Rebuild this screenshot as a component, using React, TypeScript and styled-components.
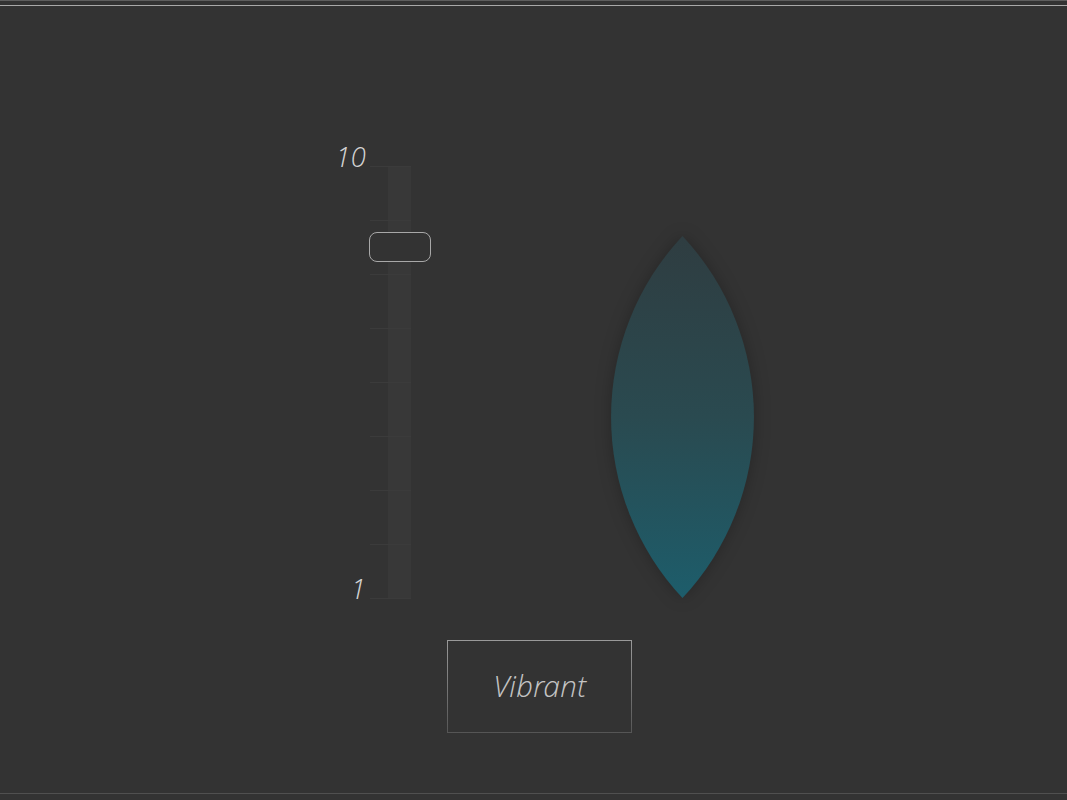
import React from "react";
import styled, { createGlobalStyle } from "styled-components";

const Global = createGlobalStyle`
  html, body { margin: 0; padding: 0; background: #333333; }
  body { font-family: "Open Sans", "Liberation Sans", sans-serif; }
`;

const Frame = styled.div`
  box-sizing: border-box;
  width: 1067px;
  height: 800px;
  background: #333333;
  border-top: 1px solid #5e5e5e;
  display: flex;
  flex-direction: column;
`;

const TopRule = styled.div`
  margin-top: 4px;
  height: 1px;
  background: #a9a9a9;
`;

const BottomRule = styled.div`
  margin-top: auto;
  margin-bottom: 6px;
  height: 1px;
  background: #505050;
`;

const Content = styled.div`
  display: flex;
  flex-direction: column;
  padding-top: 136px;
  padding-left: 335px;
`;

const Row = styled.div`
  display: flex;
  align-items: flex-start;
`;

const Labels = styled.div`
  width: 31px;
  height: 460px;
  display: flex;
  flex-direction: column;
  justify-content: space-between;
  align-items: flex-end;
  margin-right: 4px;
`;

const Label = styled.span`
  font-family: "Open Sans Light", "Open Sans", "Liberation Sans", sans-serif;
  font-weight: 300;
  font-style: italic;
  font-size: 28px;
  line-height: 28px;
  color: #d2d2d2;
`;

const Track = styled.div`
  position: relative;
  margin-top: 24px;
  width: 41px;
  height: 433px;
  display: flex;
  justify-content: flex-end;
`;

const Rail = styled.div`
  width: 23px;
  height: 100%;
  background: #383838;
`;

const Ticks = styled.div`
  position: absolute;
  inset: 0;
  display: flex;
  flex-direction: column;
  justify-content: space-between;
`;

const Tick = styled.div`
  height: 1px;
  width: 41px;
  background: #3b3b3b;
`;

const Thumb = styled.div`
  position: absolute;
  left: -1px;
  width: 62px;
  height: 30px;
  box-sizing: border-box;
  border: 1px solid #a8a8a8;
  border-radius: 8px;
  background: #333333;
`;

const LeafWrap = styled.div`
  margin-left: 200px;
  margin-top: 94px;
  width: 143px;
  height: 363px;
  filter: drop-shadow(0 0 8px rgba(0, 0, 0, 0.25));
  svg { display: block; }
`;

const ButtonRow = styled.div`
  margin-top: 38px;
  padding-left: 112px;
`;

const Button = styled.button`
  box-sizing: border-box;
  width: 185px;
  height: 93px;
  background: #333333;
  border: 1px solid;
  border-image: linear-gradient(to bottom, #9a9a9a, #555555) 1;
  font-family: "Open Sans Light", "Open Sans", "Liberation Sans", sans-serif;
  font-weight: 300;
  font-style: italic;
  font-size: 30px;
  color: #c4c4c4;
  display: flex;
  align-items: center;
  justify-content: center;
  padding: 0 0 2px 0;
  cursor: pointer;
`;

const TICKS = 9;
const MIN = 1;
const MAX = 10;
const value = 8.31;

export default function App() {
  const trackH = 432;
  const thumbTop = ((MAX - value) / (MAX - MIN)) * trackH - 15;
  return (
    <>
      <Global />
      <Frame>
        <TopRule />
        <Content>
          <Row>
            <Labels>
              <Label>10</Label>
              <Label>1</Label>
            </Labels>
            <Track>
              <Rail />
              <Ticks>
                {Array.from({ length: TICKS }).map((_, i) => (
                  <Tick key={i} />
                ))}
              </Ticks>
              <Thumb style={{ top: thumbTop }} />
            </Track>
            <LeafWrap>
              <svg width="143" height="363" viewBox="0 0 143 363">
                <defs>
                  <linearGradient id="leafGrad" x1="0" y1="0" x2="0" y2="1">
                    <stop offset="0" stopColor="#2f3d41" />
                    <stop offset="0.5" stopColor="#2a4a50" />
                    <stop offset="1" stopColor="#1d5d6b" />
                  </linearGradient>
                </defs>
                <path
                  d="M71.5 0 A265 265 0 0 1 71.5 362 A265 265 0 0 1 71.5 0 Z"
                  fill="url(#leafGrad)"
                />
              </svg>
            </LeafWrap>
          </Row>
          <ButtonRow>
            <Button>Vibrant</Button>
          </ButtonRow>
        </Content>
        <BottomRule />
      </Frame>
    </>
  );
}
